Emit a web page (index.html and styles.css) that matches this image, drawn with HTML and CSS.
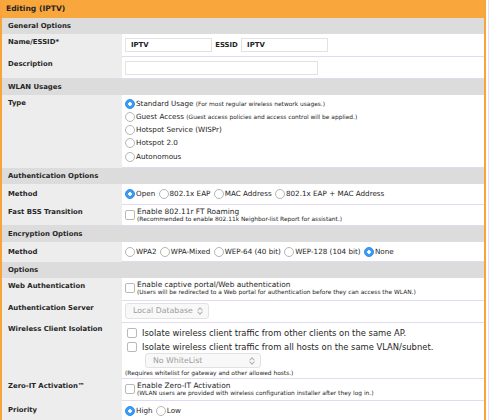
FILE: index.html
```html
<!DOCTYPE html>
<html lang="en">
<head>
    <meta charset="UTF-8">
    <meta name="viewport" content="width=device-width, initial-scale=1.0">
    <title>Editing (IPTV)</title>
    <link rel="stylesheet" href="styles.css">
</head>
<body>
    <div class="page">
        <div class="wlan-editor">
            <div class="editor-title">Editing (IPTV)</div>
            <table class="wlan-table">
                <tr class="section"><td colspan="2">General Options</td></tr>
                <tr class="row-input">
                    <th>Name/ESSID*</th>
                    <td>
                        <input type="text" class="text-name" value="IPTV">
                        <span class="inline-label">ESSID</span>
                        <input type="text" class="text-name" value="IPTV">
                    </td>
                </tr>
                <tr class="row-input">
                    <th>Description</th>
                    <td><input type="text" class="text-desc" value=""></td>
                </tr>

                <tr class="section"><td colspan="2">WLAN Usages</td></tr>
                <tr class="row-type">
                    <th>Type</th>
                    <td>
                        <label class="opt"><input type="radio" name="usage" checked>Standard Usage <small>(For most regular wireless network usages.)</small></label>
                        <label class="opt"><input type="radio" name="usage">Guest Access <small>(Guest access policies and access control will be applied.)</small></label>
                        <label class="opt"><input type="radio" name="usage">Hotspot Service (WISPr)</label>
                        <label class="opt"><input type="radio" name="usage">Hotspot 2.0</label>
                        <label class="opt"><input type="radio" name="usage">Autonomous</label>
                    </td>
                </tr>

                <tr class="section"><td colspan="2">Authentication Options</td></tr>
                <tr class="row-radio">
                    <th>Method</th>
                    <td>
                        <label class="opt-inline"><input type="radio" name="auth" checked>Open</label>
                        <label class="opt-inline"><input type="radio" name="auth">802.1x EAP</label>
                        <label class="opt-inline"><input type="radio" name="auth">MAC Address</label>
                        <label class="opt-inline"><input type="radio" name="auth">802.1x EAP + MAC Address</label>
                    </td>
                </tr>
                <tr class="row-check">
                    <th>Fast BSS Transition</th>
                    <td>
                        <label class="check"><input type="checkbox"><span>Enable 802.11r FT Roaming<small>(Recommended to enable 802.11k Neighbor-list Report for assistant.)</small></span></label>
                    </td>
                </tr>

                <tr class="section"><td colspan="2">Encryption Options</td></tr>
                <tr class="row-radio">
                    <th>Method</th>
                    <td>
                        <label class="opt-inline"><input type="radio" name="enc">WPA2</label>
                        <label class="opt-inline"><input type="radio" name="enc">WPA-Mixed</label>
                        <label class="opt-inline"><input type="radio" name="enc">WEP-64 (40 bit)</label>
                        <label class="opt-inline"><input type="radio" name="enc">WEP-128 (104 bit)</label>
                        <label class="opt-inline"><input type="radio" name="enc" checked>None</label>
                    </td>
                </tr>

                <tr class="section"><td colspan="2">Options</td></tr>
                <tr class="row-check row-tall">
                    <th>Web Authentication</th>
                    <td>
                        <label class="check"><input type="checkbox"><span>Enable captive portal/Web authentication<small>(Users will be redirected to a Web portal for authentication before they can access the WLAN.)</small></span></label>
                    </td>
                </tr>
                <tr class="row-select">
                    <th>Authentication Server</th>
                    <td>
                        <div class="select select-server">Local Database<span class="chevron"></span></div>
                    </td>
                </tr>
                <tr class="row-isolation">
                    <th>Wireless Client Isolation</th>
                    <td>
                        <label class="check-line"><input type="checkbox">Isolate wireless client traffic from other clients on the same AP.</label>
                        <label class="check-line"><input type="checkbox">Isolate wireless client traffic from all hosts on the same VLAN/subnet.</label>
                        <div class="select select-whitelist">No WhiteList<span class="chevron"></span></div>
                        <small class="note">(Requires whitelist for gateway and other allowed hosts.)</small>
                    </td>
                </tr>
                <tr class="row-check row-tall">
                    <th>Zero-IT Activation&trade;</th>
                    <td>
                        <label class="check"><input type="checkbox"><span>Enable Zero-IT Activation<small>(WLAN users are provided with wireless configuration installer after they log in.)</small></span></label>
                    </td>
                </tr>
                <tr class="row-radio">
                    <th>Priority</th>
                    <td>
                        <label class="opt-inline"><input type="radio" name="prio" checked>High</label>
                        <label class="opt-inline"><input type="radio" name="prio">Low</label>
                    </td>
                </tr>
            </table>
        </div>
    </div>
</body>
</html>
```

FILE: styles.css
```css
body {
    margin: 0;
    padding: 0;
    background-color: #fff;
    font-family: "DejaVu Sans", Verdana, sans-serif;
    font-size: 7px;
    color: #1e1e1e;
}

.page {
    width: 488px;
    border-right: 1px solid #e6e0f6;
}

.wlan-editor {
    width: 482px;
    border-left: 2px solid #f7a43b;
    border-right: 2px solid #f7a43b;
}

.editor-title {
    height: 18px;
    line-height: 18px;
    padding-left: 4px;
    background-color: #f9a63c;
    font-weight: bold;
    font-size: 7.6px;
    color: #262626;
}

.wlan-table {
    width: 100%;
    border-collapse: collapse;
}

.wlan-table th,
.wlan-table td {
    padding: 0;
    vertical-align: top;
    text-align: left;
}

.wlan-table th {
    width: 114px;
    padding: 4px 0 0 6px;
    background-color: #ededed;
    font-weight: bold;
    font-size: 6.9px;
    line-height: 8px;
    color: #262626;
    white-space: nowrap;
}

.wlan-table td {
    background-color: #fff;
    border-bottom: 1px solid #e2daf3;
    padding-left: 3px;
}

.section {
    height: 16px;
}

.section td {
    padding: 0 0 0 6px;
    background-color: #dcdcdc;
    border-bottom: 0;
    font-weight: bold;
    font-size: 6.9px;
    line-height: 16px;
    color: #262626;
}

/* text inputs */
.row-input {
    height: 22px;
}

.row-input td {
    padding-top: 4px;
}

input[type="text"] {
    height: 14px;
    box-sizing: border-box;
    margin: 0;
    padding: 0 5px;
    border: 1px solid #e2e2e2;
    font-family: "DejaVu Sans", Verdana, sans-serif;
    font-size: 6.9px;
    font-weight: bold;
    color: #222;
    vertical-align: top;
}

.text-name {
    width: 87px;
}

.text-desc {
    width: 193px;
}

.inline-label {
    display: inline-block;
    margin: 0 1px;
    font-weight: bold;
    font-size: 6.9px;
    line-height: 14px;
    vertical-align: top;
}

/* radio buttons */
input[type="radio"] {
    appearance: none;
    -webkit-appearance: none;
    width: 10px;
    height: 10px;
    margin: 0 1px 0 0;
    border: 1px solid #b5b5b5;
    border-radius: 50%;
    background-color: #fff;
    vertical-align: -3px;
    box-sizing: border-box;
}

input[type="radio"]:checked {
    border-color: #2f8ef0;
    background: radial-gradient(circle, #fff 0 1.5px, #3c9af7 2px);
}

input[type="checkbox"] {
    appearance: none;
    -webkit-appearance: none;
    width: 10px;
    height: 10px;
    margin: 0 2px 0 0;
    border: 1px solid #b9b9b9;
    border-radius: 2px;
    background-color: #fff;
    box-sizing: border-box;
    flex-shrink: 0;
}

.row-type {
    height: 73px;
}

.row-type td {
    padding-top: 2px;
}

.opt {
    display: block;
    height: 13.25px;
    line-height: 13px;
    font-size: 7.2px;
    white-space: nowrap;
}

.opt small,
.check small,
.note {
    font-size: 5.9px;
}

.row-radio {
    height: 20px;
}

.row-radio th {
    padding-top: 6px;
}

.row-radio td {
    padding-top: 1px;
    line-height: 18px;
    font-size: 7.2px;
    white-space: nowrap;
}

.opt-inline {
    margin-right: 1px;
}

/* checkbox with description */
.row-check {
    height: 21px;
}

.row-tall {
    height: 22px;
}

.row-check td {
    padding-top: 3px;
}

.check {
    display: flex;
    align-items: flex-start;
    line-height: 8px;
}

.check input {
    margin-top: 2px;
}

.check span {
    display: flex;
    flex-direction: column;
    font-size: 7.4px;
}

.check small {
    line-height: 7px;
}

/* selects */
.select {
    position: relative;
    box-sizing: border-box;
    height: 16px;
    line-height: 14px;
    padding-left: 7px;
    border: 1px solid #e2e2e2;
    border-radius: 3px;
    background-color: #f8f8f8;
    color: #9c9c9c;
    font-size: 7.8px;
}

.chevron {
    position: absolute;
    right: 5px;
    top: 3px;
    width: 5px;
    height: 8px;
}

.chevron::before,
.chevron::after {
    content: "";
    position: absolute;
    left: 0;
    width: 3px;
    height: 3px;
    border-left: 1px solid #b0b0b0;
    border-top: 1px solid #b0b0b0;
}

.chevron::before {
    top: 1px;
    transform: rotate(45deg);
}

.chevron::after {
    bottom: 1px;
    transform: rotate(225deg);
}

.row-select {
    height: 22px;
}

.row-select td {
    padding-top: 2px;
}

.select-server {
    width: 84px;
}

.row-isolation {
    height: 55px;
}

.row-isolation th {
    padding-top: 3px;
}

.row-isolation td {
    padding-top: 3px;
}

.check-line {
    display: flex;
    align-items: center;
    height: 14px;
    margin-left: 2px;
    font-size: 8.4px;
    white-space: nowrap;
}

.check-line input {
    margin-right: 5px;
}

.select-whitelist {
    width: 116px;
    height: 15px;
    line-height: 13px;
    margin: -1px 0 0 20px;
}

.note {
    display: block;
    line-height: 10px;
}
```
